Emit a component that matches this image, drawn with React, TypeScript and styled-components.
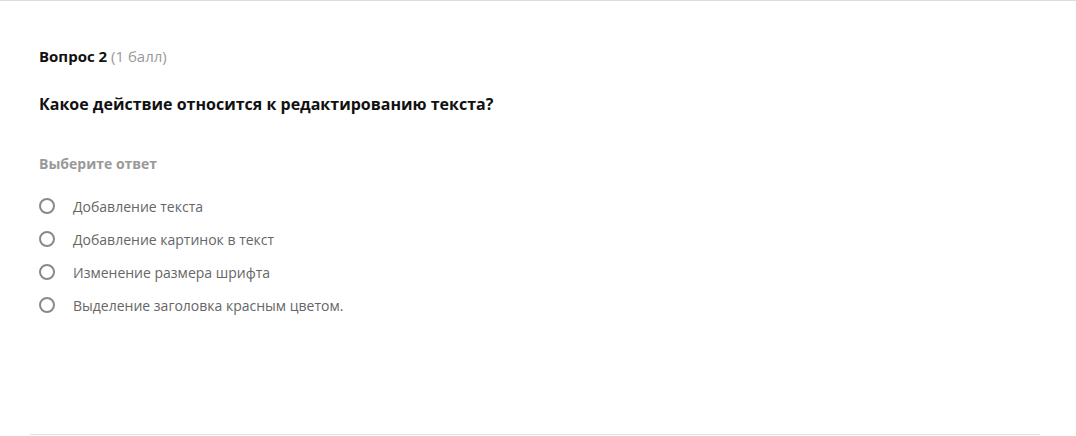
import React from "react";
import styled, { createGlobalStyle } from "styled-components";

const Global = createGlobalStyle`
  html, body { margin: 0; padding: 0; background: #fff; }
  body { font-family: "Open Sans", "Liberation Sans", sans-serif; }
`;

const Page = styled.div`
  width: 1076px;
  height: 436px;
  box-sizing: border-box;
  border-top: 1px solid #dcdcdc;
  display: flex;
  flex-direction: column;
`;

const Content = styled.div`
  flex: 1;
  padding: 45px 0 0 39px;
`;

const Header = styled.div`
  font-size: 15px;
  line-height: 20px;
  color: #111;
`;

const Num = styled.span`
  font-weight: 700;
`;

const Points = styled.span`
  color: #999;
`;

const Question = styled.div`
  margin-top: 27px;
  font-size: 16px;
  font-weight: 700;
  line-height: 22px;
  color: #111;
`;

const Hint = styled.div`
  margin-top: 39px;
  font-size: 14px;
  font-weight: 700;
  line-height: 20px;
  color: #999;
`;

const Options = styled.div`
  margin-top: 22px;
  display: flex;
  flex-direction: column;
  gap: 13px;
`;

const Option = styled.label`
  display: flex;
  align-items: center;
  height: 20px;
  font-size: 14px;
  color: #666;
  cursor: pointer;
`;

const Radio = styled.span`
  width: 16px;
  height: 16px;
  box-sizing: border-box;
  border: 2px solid #8a8a8a;
  border-radius: 50%;
  margin-right: 18px;
  flex-shrink: 0;
`;

const Footer = styled.div`
  margin: 0 36px 1px 30px;
  height: 1px;
  background: #e3e3e3;
`;

const answers = [
  "Добавление текста",
  "Добавление картинок в текст",
  "Изменение размера шрифта",
  "Выделение заголовка красным цветом.",
];

export default function App() {
  return (
    <>
      <Global />
      <Page>
        <Content>
          <Header>
            <Num>Вопрос 2</Num> <Points>(1 балл)</Points>
          </Header>
          <Question>Какое действие относится к редактированию текста?</Question>
          <Hint>Выберите ответ</Hint>
          <Options>
            {answers.map((a) => (
              <Option key={a}>
                <Radio />
                {a}
              </Option>
            ))}
          </Options>
        </Content>
        <Footer />
      </Page>
    </>
  );
}
